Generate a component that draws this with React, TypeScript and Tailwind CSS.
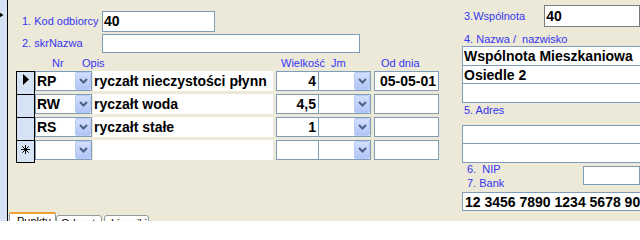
import React from 'react';

const LABEL = 'text-[11px] leading-[13px] text-[#3535f2] whitespace-pre';
const DATA = 'text-[14px] font-bold leading-[18px] text-black whitespace-nowrap overflow-hidden';
const BOX = 'border border-[#7f9db9] bg-white';

function DropButton() {
  return (
    <div className="w-[16px] h-[18px] shrink-0 rounded-[2px] border border-[#b8cbf7] bg-gradient-to-b from-[#d2defd] to-[#b1c5f5] flex items-center justify-center">
      <svg width="9" height="6" viewBox="0 0 9 6">
        <polyline points="1,1 4.5,4.5 8,1" fill="none" stroke="#4d6185" strokeWidth="2" />
      </svg>
    </div>
  );
}

function Combo({ value, width }: { value?: string; width: string }) {
  return (
    <div className={`${width} h-[20px] ${BOX} flex items-start`}>
      <div className={`${DATA} flex-1 pl-[1px]`}>{value}</div>
      <DropButton />
    </div>
  );
}

type Row = { nr?: string; opis?: string; ilosc?: string; od?: string; marker: 'current' | 'none' | 'new' };

const ROWS: Row[] = [
  { nr: 'RP', opis: 'ryczałt nieczystości płynn', ilosc: '4', od: '05-05-01', marker: 'current' },
  { nr: 'RW', opis: 'ryczałt woda', ilosc: '4,5', marker: 'none' },
  { nr: 'RS', opis: 'ryczałt stałe', ilosc: '1', marker: 'none' },
  { marker: 'new' },
];

function Selector({ marker, last }: { marker: Row['marker']; last: boolean }) {
  return (
    <div
      className={`ml-[8px] w-[19px] h-[23px] shrink-0 border-x border-t border-black bg-[#d5e3f5] flex justify-center ${last ? 'border-b' : ''}`}
    >
      {marker === 'current' && (
        <svg width="6" height="11" viewBox="0 0 6 11" className="mt-[2px]">
          <polygon points="0,0 6,5.5 0,11" fill="#000" />
        </svg>
      )}
      {marker === 'new' && (
        <svg width="9" height="9" viewBox="0 0 9 9" className="mt-[4px]">
          <g stroke="#000" strokeWidth="1">
            <line x1="4.5" y1="0" x2="4.5" y2="9" />
            <line x1="0" y1="4.5" x2="9" y2="4.5" />
            <line x1="1.3" y1="1.3" x2="7.7" y2="7.7" />
            <line x1="7.7" y1="1.3" x2="1.3" y2="7.7" />
          </g>
        </svg>
      )}
    </div>
  );
}

function LeftPanel() {
  return (
    <div className="w-[432px] shrink-0 flex flex-col">
      <div className="mt-[11px] flex h-[21px] items-center">
        <span className={`${LABEL} pl-[14px] w-[94px]`}>1. Kod odbiorcy</span>
        <div className={`w-[113px] h-[21px] ${BOX} ${DATA} pl-[1px] leading-[19px]`}>40</div>
      </div>
      <div className="mt-[2px] flex h-[19px] items-center">
        <span className={`${LABEL} pl-[14px] w-[94px]`}>2. skrNazwa</span>
        <div className={`w-[258px] h-[19px] ${BOX}`} />
      </div>
      <div className="h-[18px] flex items-end pb-[1px]">
        <span className={`${LABEL} ml-[44px] w-[30px]`}>Nr</span>
        <span className={`${LABEL} w-[199px]`}>Opis</span>
        <span className={`${LABEL} w-[50px]`}>Wielkość</span>
        <span className={`${LABEL} w-[50px]`}>Jm</span>
        <span className={LABEL}>Od dnia</span>
      </div>
      <div className="flex flex-col">
        {ROWS.map((r, i) => (
          <div key={i} className="flex h-[23px] items-start">
            <Selector marker={r.marker} last={i === ROWS.length - 1} />
            <Combo value={r.nr} width="w-[57px]" />
            <div className={`ml-[1px] w-[180px] h-[20px] bg-white pl-[1px] ${DATA} leading-[20px]`}>{r.opis}</div>
            <div className={`ml-[3px] w-[43px] h-[20px] ${BOX} ${DATA} text-right pr-[2px]`}>{r.ilosc}</div>
            <div className="w-[52px] h-[20px] border border-l-0 border-[#7f9db9] bg-white flex justify-end">
              <DropButton />
            </div>
            <div className={`ml-[3px] w-[65px] h-[20px] ${BOX} ${DATA} text-right pr-[2px]`}>{r.od}</div>
          </div>
        ))}
      </div>
    </div>
  );
}

function RightPanel() {
  return (
    <div className="w-[200px] shrink-0 flex flex-col">
      <div className="mt-[5px] flex h-[22px] items-center">
        <span className={`${LABEL} pl-[24px] w-[108px]`}>3.Wspólnota</span>
        <div className={`w-[100px] h-[22px] border border-[#7b7b7b] bg-white ${DATA} pl-[1px] leading-[20px]`}>40</div>
      </div>
      <span className={`${LABEL} mt-[6px] pl-[24px]`}>4. Nazwa /  nazwisko</span>
      <div className="ml-[22px] w-[200px] border border-[#7f9db9] bg-white flex flex-col divide-y divide-[#7f9db9]">
        <div className={`h-[19px] pl-[1px] ${DATA} leading-[19px]`}>Wspólnota Mieszkaniowa</div>
        <div className={`h-[18px] pl-[1px] ${DATA}`}>Osiedle 2</div>
        <div className="h-[18px]" />
      </div>
      <span className={`${LABEL} mt-[1px] pl-[24px]`}>5. Adres</span>
      <div className="mt-[8px] ml-[22px] w-[200px] border border-[#7f9db9] bg-white flex flex-col divide-y divide-[#7f9db9]">
        <div className="h-[18px]" />
        <div className="h-[18px]" />
      </div>
      <div className="flex h-[29px]">
        <div className="w-[148px] pl-[27px] flex flex-col gap-[1px]">
          <span className={LABEL}>6.  NIP</span>
          <span className={LABEL}>7. Bank</span>
        </div>
        <div className={`mt-[3px] w-[60px] h-[19px] ${BOX}`} />
      </div>
      <div className={`ml-[22px] w-[200px] h-[19px] ${BOX} pl-[2px] ${DATA} leading-[17px]`}>
        12 3456 7890 1234 5678 9012 3456
      </div>
    </div>
  );
}

function Tabs() {
  return (
    <div className="h-[9px] flex items-start overflow-hidden">
      <div className="ml-[1px] w-[47px] h-[16px] border-x border-[#919b9c] border-t-[2px] border-t-[#f0a030] rounded-t-[2px] bg-white pl-[7px] pt-[1px] text-[11px] leading-[13px] text-black">
        Punkty
      </div>
      <div className="mt-[3px] w-[46px] h-[16px] border border-[#919b9c] rounded-t-[3px] bg-gradient-to-b from-white to-[#f0efe8] pl-[4px] pt-[1px] text-[11px] leading-[13px] text-black">
        Odczyty
      </div>
      <div className="mt-[3px] ml-[2px] w-[45px] h-[16px] border border-[#919b9c] rounded-t-[3px] bg-gradient-to-b from-white to-[#f0efe8] pl-[6px] pt-[1px] text-[11px] leading-[13px] text-black">
        Liczniki
      </div>
    </div>
  );
}

export default function App() {
  return (
    <div className="w-[640px] h-[221px] overflow-hidden bg-[#ece9d8] flex font-['Liberation_Sans',Arial,sans-serif]">
      <div className="w-[8px] h-full shrink-0 bg-[#d5e3f5] border-r border-black overflow-hidden">
        <svg width="4" height="8" viewBox="0 0 4 8" className="mt-[11px]">
          <polygon points="-3,0 3.5,4 -3,8" fill="#000" />
        </svg>
      </div>
      <div className="flex-1 flex flex-col">
        <div className="h-[212px] flex">
          <LeftPanel />
          <RightPanel />
        </div>
        <Tabs />
      </div>
    </div>
  );
}
